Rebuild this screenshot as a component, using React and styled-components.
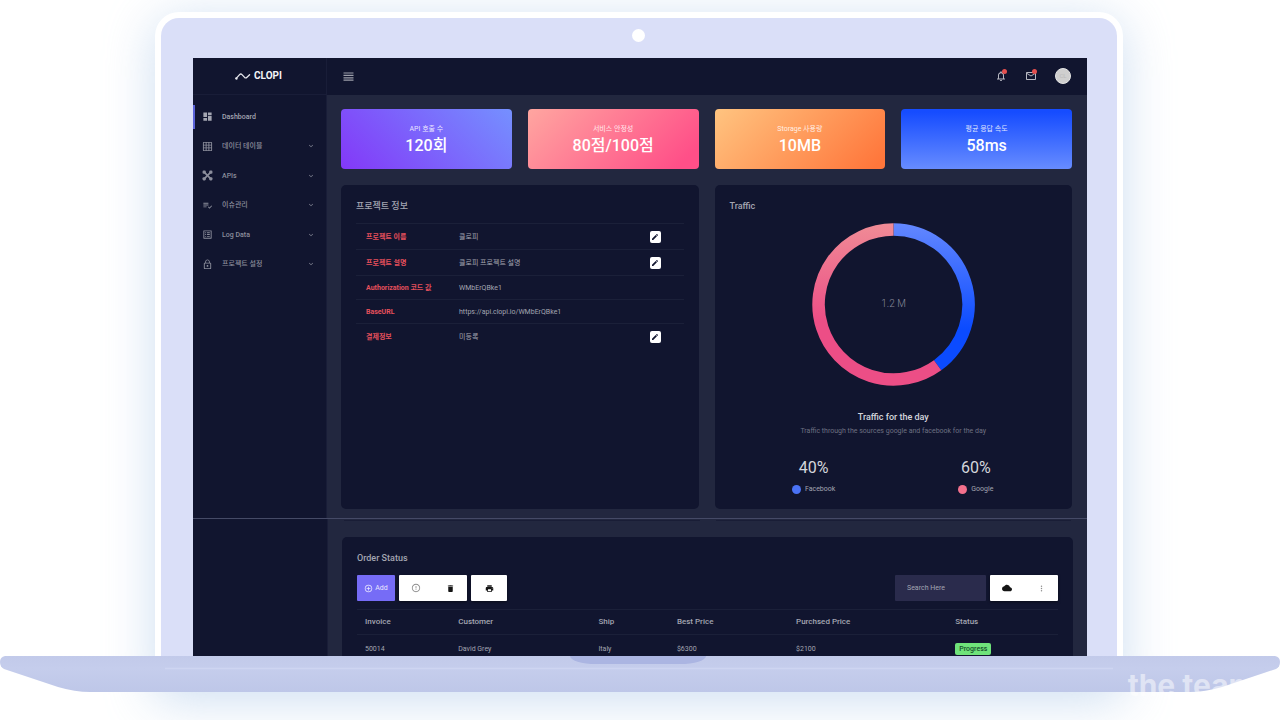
import React from "react";
import styled, { createGlobalStyle, css } from "styled-components";
import {
  MdDashboard,
  MdGridOn,
  MdPlaylistAddCheck,
  MdListAlt,
  MdLockOutline,
  MdExpandMore,
  MdEdit,
  MdAddCircleOutline,
  MdErrorOutline,
  MdDelete,
  MdCloud,
  MdPrint,
  MdMoreVert,
  MdMailOutline,
  MdNotificationsNone,
} from "react-icons/md";

const color = {
  panel: "#11152f",
  page: "#22273f",
  rule: "#1b2039",
  text: "#a4a6b2",
  red: "#e5505c",
  bright: "#d4d5dc",
};

const GlobalStyle = createGlobalStyle`
  *, *::before, *::after { box-sizing: border-box; }
  body {
    margin: 0;
    background: #fff;
    overflow: hidden;
    color: ${color.text};
    font-family: Roboto, "Noto Sans CJK KR", sans-serif;
    font-size: 7px;
    line-height: 12px;
  }
  button, input { font: inherit; border: 0; padding: 0; margin: 0; }
  h2, h3, p, ul { margin: 0; padding: 0; }
  svg { display: block; }
`;

/* Laptop frame */

const Stage = styled.div`
  display: flex;
  flex-direction: column;
  height: 100vh;
  padding: 12px 0 28px;
  overflow: hidden;
`;

const Lid = styled.div`
  flex: 1;
  min-height: 0;
  display: flex;
  flex-direction: column;
  margin: 0 157px 0 155px;
  padding: 0 30px 36px 32px;
  background: #dadff8;
  border: 6px solid #fff;
  border-bottom: 0;
  border-radius: 24px 24px 0 0;
  box-shadow: 0 8px 50px rgba(150, 185, 225, 0.48);
`;

const Bezel = styled.div`
  flex: none;
  display: flex;
  justify-content: center;
  align-items: center;
  height: 40px;
  padding: 0 4px 5px 0;
`;

const Camera = styled.span`
  width: 13px;
  height: 13px;
  border-radius: 50%;
  background: #fff;
`;

const Base = styled.footer`
  flex: none;
  position: relative;
  height: 36px;
  margin-top: -36px;
`;

const BaseShape = styled.svg`
  width: 100%;
  height: 36px;
`;

const Notch = styled.span`
  position: absolute;
  top: 0;
  left: 50%;
  width: 136px;
  height: 8px;
  margin-left: -70px;
  border-radius: 0 0 26px 26px / 0 0 8px 8px;
  background: #abb5e2;
`;

const Watermark = styled.span`
  position: absolute;
  top: 11px;
  right: 24px;
  font: 700 30px/36px Inter, sans-serif;
  color: rgba(255, 255, 255, 0.5);
`;

/* Screen */

const Screen = styled.div`
  flex: 1;
  min-height: 0;
  overflow: hidden;
  background: ${color.page};
`;

const Shot = styled.section`
  display: grid;
  grid-template-columns: ${(p) => p.$side}px minmax(0, 1fr);
  ${(p) =>
    p.$seam &&
    css`
      border-top: 1px solid #454a66;
    `}
`;

const Sidebar = styled.aside`
  background: ${color.panel};
  border-right: 1px solid #191d38;
`;

const Brand = styled.div`
  display: flex;
  align-items: center;
  justify-content: center;
  gap: 3px;
  height: 37px;
  padding-right: 2px;
  border-bottom: 1px solid #191d38;
  color: #f4f4f7;
  font-size: 10px;
  font-weight: 700;
`;

const Menu = styled.ul`
  display: grid;
  grid-auto-rows: 1fr;
  height: 177px;
  margin-top: 7px;
  list-style: none;
`;

const MenuItem = styled.li`
  display: flex;
  align-items: center;
`;

const MenuLink = styled.a`
  flex: 1;
  display: flex;
  align-items: center;
  gap: 9px;
  height: 24px;
  padding: 0 11px 0 7px;
  border-left: 2px solid ${(p) => (p.$active ? "#5a62d8" : "transparent")};
  color: ${(p) => (p.$active ? color.text : "#8c8e9c")};
  font-weight: 500;
  text-decoration: none;

  svg:last-of-type:not(:first-of-type) {
    margin-left: auto;
  }
`;

const Column = styled.div`
  min-width: 0;
`;

const Topbar = styled.header`
  display: flex;
  align-items: center;
  height: 37px;
  padding: 0 16px 1px;
  background: ${color.panel};
`;

const IconButton = styled.button`
  position: relative;
  display: flex;
  background: none;
  color: #b7b8c2;
`;

const Actions = styled.div`
  display: flex;
  align-items: center;
  gap: 18px;
  margin-left: auto;
`;

const Dot = styled.span`
  position: absolute;
  top: -1px;
  right: 0;
  width: 5px;
  height: 5px;
  border-radius: 50%;
  background: #e5504f;
`;

const Avatar = styled.span`
  width: 16px;
  height: 16px;
  border-radius: 50%;
  border: 1px solid #e4e4e4;
  background: #cfcfcf;
  color: #bbb;
  font-size: 6px;
  line-height: 14px;
  text-align: center;
`;

const Content = styled.main`
  display: grid;
  gap: 16px;
  padding: 14px 15px 9px 14px;
`;

const Cards = styled.div`
  display: grid;
  grid-template-columns: repeat(4, 1fr);
  gap: 16px;
`;

const StatCard = styled.article`
  height: 60px;
  padding-top: 14px;
  border-radius: 4px;
  background: ${(p) => p.$fill};
  color: #fff;
  text-align: center;
`;

const CardLabel = styled.p`
  color: rgba(255, 255, 255, 0.85);
`;

const CardValue = styled.p`
  font-size: 16px;
  font-weight: 500;
  line-height: 22px;
`;

const Panels = styled.div`
  display: grid;
  grid-template-columns: 1fr 1fr;
  gap: 16px;
`;

const Panel = styled.section`
  min-height: 324px;
  padding: 15px 15px 14px;
  border-radius: 5px;
  background: ${color.panel};
`;

const PanelTitle = styled.h2`
  color: ${color.text};
  font-size: 9px;
  font-weight: 500;
  line-height: 12px;
`;

const InfoTable = styled.table`
  width: 100%;
  margin-top: 11px;
  border-collapse: collapse;
  table-layout: fixed;

  th,
  td {
    padding: 0 10px;
    border-top: 1px solid ${color.rule};
    text-align: left;
    white-space: nowrap;
  }
  th {
    width: 93px;
    color: ${color.red};
    font-weight: 700;
  }
  td:last-child {
    width: 44px;
  }
`;

const InfoRow = styled.tr`
  height: ${(p) => (p.$editable ? 26 : 24)}px;
`;

const EditButton = styled.button`
  display: flex;
  align-items: center;
  justify-content: center;
  width: 11px;
  height: 12px;
  border-radius: 2px;
  background: #fff;
  color: #11152f;
`;

const Traffic = styled.div`
  display: flex;
  flex-direction: column;
  align-items: center;
  padding-top: 11px;
  text-align: center;
`;

const Donut = styled.svg`
  width: 163px;
  height: 163px;
`;

const TrafficTitle = styled.h3`
  margin-top: 25px;
  color: ${color.bright};
  font-size: 9px;
  font-weight: 500;
  line-height: 12px;
`;

const TrafficNote = styled.p`
  margin-top: 2px;
  color: #6d7082;
`;

const Shares = styled.div`
  display: grid;
  grid-template-columns: 1fr 1fr;
  width: 100%;
  margin-top: 19px;
  padding-left: 3px;
`;

const ShareValue = styled.p`
  color: ${color.bright};
  font-size: 16px;
  line-height: 24px;
`;

const ShareLabel = styled.p`
  display: flex;
  align-items: center;
  justify-content: center;
  gap: 4px;
  margin-top: 3px;
`;

const Swatch = styled.span`
  width: 9px;
  height: 9px;
  border-radius: 50%;
  background: ${(p) => p.$fill};
`;

/* Order status */

const OrderArea = styled.div`
  padding: 1px 14px 0;
`;

const CardEdge = styled.div`
  display: grid;
  grid-template-columns: 1fr 1fr;
  gap: 16px;
  padding: 0 2px;
  margin-bottom: 16px;

  span {
    height: 1px;
    background: #191d36;
  }
`;

const Toolbar = styled.div`
  display: flex;
  gap: 4px;
  height: 26px;
  margin-top: 11px;
`;

const AddButton = styled.button`
  display: flex;
  align-items: center;
  justify-content: center;
  gap: 2px;
  width: 38px;
  border-radius: 1px;
  background: #766cf6;
  color: #e9e7ff;
`;

const ButtonGroup = styled.div`
  display: flex;
  border-radius: 1px;
  background: #fff;
  box-shadow: 0 1px 3px rgba(0, 0, 0, 0.5);
`;

const ToolButton = styled.button`
  display: flex;
  align-items: center;
  justify-content: center;
  width: ${(p) => (p.$single ? 36 : 34)}px;
  background: none;
  color: ${(p) => (p.$light ? "#8d8d8d" : "#141414")};
`;

const Search = styled.input`
  width: 91px;
  margin-left: auto;
  padding: 0 12px;
  border-radius: 1px;
  background: #2a2b4c;
  color: ${color.text};

  &::placeholder {
    color: ${color.text};
    opacity: 1;
  }
`;

const OrderTable = styled.table`
  width: 100%;
  margin-top: 8px;
  border-collapse: collapse;
  table-layout: fixed;

  th,
  td {
    height: 25px;
    padding: 0 8px;
    border-top: 1px solid ${color.rule};
    text-align: left;
    white-space: nowrap;
  }
  th {
    color: ${color.text};
    font-size: 8px;
    font-weight: 500;
  }
  tbody td {
    height: 28px;
  }
`;

const Badge = styled.span`
  display: inline-block;
  padding: 0 4px;
  border-radius: 2px;
  background: #6fe37a;
  color: #16512a;
  font-weight: 500;
`;

const LogoMark = () => (
  <svg width="16" height="9" viewBox="0 0 16 9" fill="none" stroke="#e6e6ec" strokeWidth="1.3" strokeLinecap="round" strokeLinejoin="round">
    <path d="M1.2 6.4 L4.6 2.6 Q5.8 1.4 7 2.6 L9.6 5.4 Q10.8 6.4 12 5.2 L14.6 2.8" />
    <circle cx="1.4" cy="6.4" r="0.6" />
  </svg>
);

const BarsIcon = () => (
  <svg width="11" height="9" viewBox="0 0 11 9" fill="none" stroke="#9d9fab" strokeWidth="1.2">
    <path d="M0.5 1 H10.5 M0.5 3.4 H10.5 M0.5 5.8 H10.5 M0.5 8.2 H10.5" />
  </svg>
);

const ApiIcon = ({ size }) => (
  <svg width={size} height={size} viewBox="0 0 20 20" fill="currentColor">
    <path d="M4 4 L16 16 M16 4 L4 16" stroke="currentColor" strokeWidth="3" />
    <rect x="1" y="1" width="6" height="6" rx="2" />
    <rect x="13" y="1" width="6" height="6" rx="2" />
    <rect x="1" y="13" width="6" height="6" rx="2" />
    <rect x="13" y="13" width="6" height="6" rx="2" />
  </svg>
);

const menu = [
  { label: "Dashboard", Icon: MdDashboard, active: true },
  { label: "데이터 테이블", Icon: MdGridOn },
  { label: "APIs", Icon: ApiIcon },
  { label: "이슈관리", Icon: MdPlaylistAddCheck },
  { label: "Log Data", Icon: MdListAlt },
  { label: "프로젝트 설정", Icon: MdLockOutline },
];

const cards = [
  { label: "API 호출 수", value: "120회", fill: "linear-gradient(45deg, #8338f8 0%, #7590ff 100%)" },
  { label: "서비스 안정성", value: "80점/100점", fill: "linear-gradient(135deg, #ffa6a0 0%, #ff4f88 90%)" },
  { label: "Storage 사용량", value: "10MB", fill: "linear-gradient(135deg, #ffc480 0%, #ff763b 95%)" },
  { label: "평균 응답 속도", value: "58ms", fill: "linear-gradient(180deg, #164cff 5%, #678cff 100%)" },
];

const info = [
  { name: "프로젝트 이름", value: "클로피", editable: true },
  { name: "프로젝트 설명", value: "클로피 프로젝트 설명", editable: true },
  { name: "Authorization 코드 값", value: "WMbErQBke1" },
  { name: "BaseURL", value: "https://api.clopi.io/WMbErQBke1" },
  { name: "결제정보", value: "미등록", editable: true },
];

const shares = [
  { value: "40%", label: "Facebook", fill: "#4a72f5" },
  { value: "60%", label: "Google", fill: "#f3708c" },
];

const orderColumns = [
  { label: "Invoice", width: "13.3%" },
  { label: "Customer", width: "20%" },
  { label: "Ship", width: "11.2%" },
  { label: "Best Price", width: "17%" },
  { label: "Purchsed Price", width: "22.7%" },
  { label: "Status" },
];

function TrafficDonut() {
  return (
    <Donut viewBox="0 0 163 163" role="img" aria-label="Traffic split">
      <defs>
        <linearGradient id="blue" gradientUnits="userSpaceOnUse" x1="0" y1="0" x2="0" y2="163">
          <stop offset="0" stopColor="#6488ff" />
          <stop offset="0.65" stopColor="#0b4bff" />
        </linearGradient>
        <linearGradient id="pink" gradientUnits="userSpaceOnUse" x1="0" y1="0" x2="0" y2="163">
          <stop offset="0" stopColor="#f08c96" />
          <stop offset="0.6" stopColor="#ec4e86" />
        </linearGradient>
      </defs>
      <path d="M81.5 6.5 A75 75 0 0 1 125.6 142.2" fill="none" stroke="url(#blue)" strokeWidth="12.5" />
      <path d="M125.6 142.2 A75 75 0 1 1 81.5 6.5" fill="none" stroke="url(#pink)" strokeWidth="12.5" />
      <text x="81.5" y="84" textAnchor="middle" fontSize="10" fontWeight="300" fill="#8a8c9b">
        1.2 M
      </text>
    </Donut>
  );
}

export default function App() {
  return (
    <>
      <GlobalStyle />
      <Stage lang="ko">
        <Lid>
          <Bezel>
            <Camera />
          </Bezel>
          <Screen>
            <Shot $side={134}>
              <Sidebar>
                <Brand>
                  <LogoMark />
                  CLOPI
                </Brand>
                <nav>
                  <Menu>
                    {menu.map(({ label, Icon, active }) => (
                      <MenuItem key={label}>
                        <MenuLink href="#" $active={active}>
                          <Icon size={11} />
                          {label}
                          {!active && <MdExpandMore size={8} />}
                        </MenuLink>
                      </MenuItem>
                    ))}
                  </Menu>
                </nav>
              </Sidebar>
              <Column>
                <Topbar>
                  <IconButton aria-label="Toggle menu">
                    <BarsIcon />
                  </IconButton>
                  <Actions>
                    <IconButton aria-label="Notifications">
                      <MdNotificationsNone size={12} />
                      <Dot />
                    </IconButton>
                    <IconButton aria-label="Messages">
                      <MdMailOutline size={12} />
                      <Dot />
                    </IconButton>
                    <Avatar>CL</Avatar>
                  </Actions>
                </Topbar>
                <Content>
                  <Cards>
                    {cards.map((c) => (
                      <StatCard key={c.label} $fill={c.fill}>
                        <CardLabel>{c.label}</CardLabel>
                        <CardValue>{c.value}</CardValue>
                      </StatCard>
                    ))}
                  </Cards>
                  <Panels>
                    <Panel>
                      <PanelTitle>프로젝트 정보</PanelTitle>
                      <InfoTable>
                        <tbody>
                          {info.map((r) => (
                            <InfoRow key={r.name} $editable={r.editable}>
                              <th scope="row">{r.name}</th>
                              <td>{r.value}</td>
                              <td>
                                {r.editable && (
                                  <EditButton aria-label={`${r.name} 수정`}>
                                    <MdEdit size={8} />
                                  </EditButton>
                                )}
                              </td>
                            </InfoRow>
                          ))}
                        </tbody>
                      </InfoTable>
                    </Panel>
                    <Panel>
                      <PanelTitle>Traffic</PanelTitle>
                      <Traffic>
                        <TrafficDonut />
                        <TrafficTitle>Traffic for the day</TrafficTitle>
                        <TrafficNote>Traffic through the sources google and facebook for the day</TrafficNote>
                        <Shares>
                          {shares.map((s) => (
                            <div key={s.label}>
                              <ShareValue>{s.value}</ShareValue>
                              <ShareLabel>
                                <Swatch $fill={s.fill} />
                                {s.label}
                              </ShareLabel>
                            </div>
                          ))}
                        </Shares>
                      </Traffic>
                    </Panel>
                  </Panels>
                </Content>
              </Column>
            </Shot>
            <Shot $side={135} $seam>
              <Sidebar />
              <OrderArea>
                <CardEdge>
                  <span />
                  <span />
                </CardEdge>
                <Panel>
                  <PanelTitle>Order Status</PanelTitle>
                  <Toolbar>
                    <AddButton>
                      <MdAddCircleOutline size={9} />
                      Add
                    </AddButton>
                    <ButtonGroup>
                      <ToolButton $light aria-label="Details">
                        <MdErrorOutline size={10} />
                      </ToolButton>
                      <ToolButton aria-label="Delete">
                        <MdDelete size={9} />
                      </ToolButton>
                    </ButtonGroup>
                    <ButtonGroup>
                      <ToolButton $single aria-label="Print">
                        <MdPrint size={9} />
                      </ToolButton>
                    </ButtonGroup>
                    <Search type="search" placeholder="Search Here" aria-label="Search Here" />
                    <ButtonGroup>
                      <ToolButton aria-label="Upload">
                        <MdCloud size={10} />
                      </ToolButton>
                      <ToolButton $light aria-label="More">
                        <MdMoreVert size={9} />
                      </ToolButton>
                    </ButtonGroup>
                  </Toolbar>
                  <OrderTable>
                    <colgroup>
                      {orderColumns.map((c) => (
                        <col key={c.label} width={c.width} />
                      ))}
                    </colgroup>
                    <thead>
                      <tr>
                        {orderColumns.map((c) => (
                          <th key={c.label} scope="col">
                            {c.label}
                          </th>
                        ))}
                      </tr>
                    </thead>
                    <tbody>
                      <tr>
                        <td>50014</td>
                        <td>David Grey</td>
                        <td>Italy</td>
                        <td>$6300</td>
                        <td>$2100</td>
                        <td>
                          <Badge>Progress</Badge>
                        </td>
                      </tr>
                    </tbody>
                  </OrderTable>
                </Panel>
              </OrderArea>
            </Shot>
          </Screen>
        </Lid>
        <Base>
          <BaseShape viewBox="0 0 1280 36" preserveAspectRatio="none" aria-hidden="true">
            <defs>
              <linearGradient id="base" x1="0" y1="0" x2="0" y2="1">
                <stop offset="0" stopColor="#c2caea" />
                <stop offset="0.35" stopColor="#c5cdec" />
                <stop offset="1" stopColor="#bec7e8" />
              </linearGradient>
            </defs>
            <path d="M5 0 H1275 Q1280 1 1280 6 Q1280 11 1276 13 L1222 31 Q1205 36 1190 36 H90 Q75 36 58 31 L4 13 Q0 11 0 6 Q0 1 5 0 Z" fill="url(#base)" />
            <path d="M165 12.5 H1113" stroke="#ced5f1" strokeWidth="1.5" />
          </BaseShape>
          <Notch />
          <Watermark>the team</Watermark>
        </Base>
      </Stage>
    </>
  );
}
